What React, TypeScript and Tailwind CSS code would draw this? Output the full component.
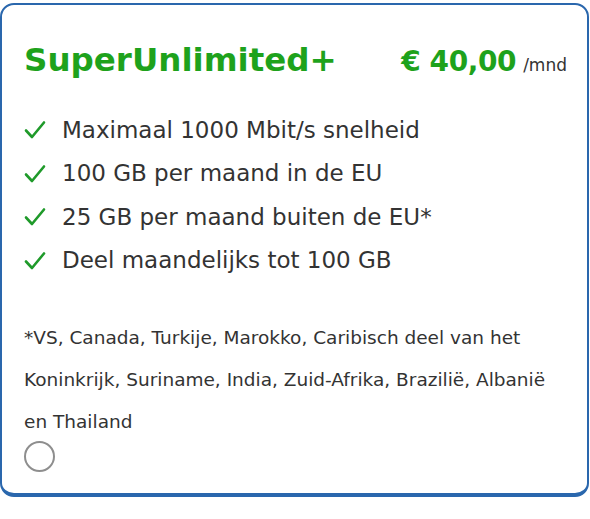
import { useState } from "react";

const features = [
  "Maximaal 1000 Mbit/s snelheid",
  "100 GB per maand in de EU",
  "25 GB per maand buiten de EU*",
  "Deel maandelijks tot 100 GB",
];

function Check() {
  return (
    <svg width="22" height="20" viewBox="0 0 22 20" fill="none">
      <path d="M2 10.5 L8 17 L20 2.5" stroke="#1f9a2a" strokeWidth="2.6" strokeLinecap="round" strokeLinejoin="round" />
    </svg>
  );
}

export default function App() {
  const [selected, setSelected] = useState(false);

  return (
    <div className="h-[519px] w-[590px] bg-white pt-[3px] font-['DejaVu_Sans',sans-serif]">
      <div className="mr-[1px] h-[494px] rounded-[14px] border-2 border-b-4 border-[#2a67ad] bg-white pl-[22px] pr-[20px] pt-[35px]">
        <div className="flex items-baseline">
          <h1 className="text-[32.5px] font-bold leading-[40px] text-[#1ea21c]">
            SuperUnlimited+
          </h1>
          <span className="ml-auto text-[28px] font-bold leading-[40px] tracking-[-0.4px] text-[#1ea21c]">
            € 40,00
          </span>
          <span className="ml-[7px] text-[17px] text-[#333]">/mnd</span>
        </div>

        <ul className="mt-[32px] space-y-[11.5px]">
          {features.map((f) => (
            <li key={f} className="flex h-[32px] items-center">
              <span className="mr-[16px] flex w-[22px] justify-center">
                <Check />
              </span>
              <span className="text-[23px] text-[#333]">{f}</span>
            </li>
          ))}
        </ul>

        <p className="mt-[40px] pr-[8px] text-[18.5px] leading-[42px] text-[#333]">
          *VS, Canada, Turkije, Marokko, Caribisch deel van het Koninkrijk, Suriname, India, Zuid-Afrika, Brazilië, Albanië en Thailand
        </p>

        <button
          type="button"
          onClick={() => setSelected(!selected)}
          className="-mt-[2px] flex h-[31px] w-[31px] items-center justify-center rounded-full border-[2.5px] border-[#8e8e8e]"
        >
          {selected ? <span className="h-[15px] w-[15px] rounded-full bg-[#2a67ad]" /> : null}
        </button>
      </div>
    </div>
  );
}
